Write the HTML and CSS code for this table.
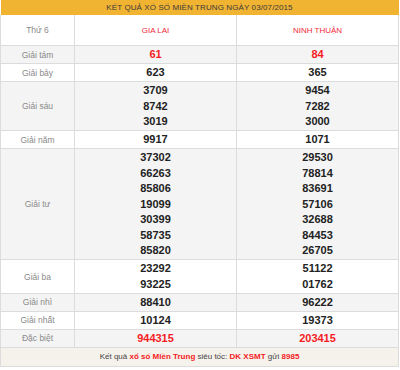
FILE: index.html
```html
<!DOCTYPE html>
<html lang="vi">
<head>
    <meta charset="UTF-8">
    <title>Kết quả xổ số Miền Trung</title>
    <link rel="stylesheet" href="styles.css">
</head>
<body>
    <table class="kq">
        <colgroup>
            <col class="col-label">
            <col class="col-tinh">
            <col class="col-tinh">
        </colgroup>
        <tr class="title">
            <td colspan="3">KẾT QUẢ XỔ SỐ MIỀN TRUNG NGÀY 03/07/2015</td>
        </tr>
        <tr class="tinh">
            <td class="label">Thứ 6</td>
            <td>GIA LAI</td>
            <td>NINH THUẬN</td>
        </tr>
        <tr class="alt">
            <td class="label">Giải tám</td>
            <td class="so red"><div>61</div></td>
            <td class="so red"><div>84</div></td>
        </tr>
        <tr>
            <td class="label">Giải bảy</td>
            <td class="so"><div>623</div></td>
            <td class="so"><div>365</div></td>
        </tr>
        <tr class="alt">
            <td class="label">Giải sáu</td>
            <td class="so"><div>3709</div><div>8742</div><div>3019</div></td>
            <td class="so"><div>9454</div><div>7282</div><div>3000</div></td>
        </tr>
        <tr>
            <td class="label">Giải năm</td>
            <td class="so"><div>9917</div></td>
            <td class="so"><div>1071</div></td>
        </tr>
        <tr class="alt">
            <td class="label">Giải tư</td>
            <td class="so">
                <div>37302</div><div>66263</div><div>85806</div><div>19099</div>
                <div>30399</div><div>58735</div><div>85820</div>
            </td>
            <td class="so">
                <div>29530</div><div>78814</div><div>83691</div><div>57106</div>
                <div>32688</div><div>84453</div><div>26705</div>
            </td>
        </tr>
        <tr>
            <td class="label">Giải ba</td>
            <td class="so"><div>23292</div><div>93225</div></td>
            <td class="so"><div>51122</div><div>01762</div></td>
        </tr>
        <tr class="alt">
            <td class="label">Giải nhì</td>
            <td class="so"><div>88410</div></td>
            <td class="so"><div>96222</div></td>
        </tr>
        <tr>
            <td class="label">Giải nhất</td>
            <td class="so"><div>10124</div></td>
            <td class="so"><div>19373</div></td>
        </tr>
        <tr class="alt">
            <td class="label">Đặc biệt</td>
            <td class="so red"><div>944315</div></td>
            <td class="so red"><div>203415</div></td>
        </tr>
        <tr class="footer">
            <td colspan="3">Kết quả <b>xổ số Miền Trung</b> siêu tốc: <b>DK XSMT</b> gửi <b>8985</b></td>
        </tr>
    </table>
</body>
</html>
```

FILE: styles.css
```css
body {
    margin: 0;
    font-family: "Liberation Sans", Arial, sans-serif;
    background: #fff;
}
.kq {
    width: 399px;
    border-collapse: collapse;
    table-layout: fixed;
}
.col-label {
    width: 74px;
}
.col-tinh {
    width: 162px;
}
.kq td {
    border: 1px solid #dcdcdc;
    text-align: center;
    vertical-align: middle;
    padding: 1px 0 0.5px;
}
.kq tr.title td {
    background: #f1b332;
    color: #3a3a3a;
    font-size: 8px;
    height: 15px;
    padding: 0;
    border: none;
    letter-spacing: 0.1px;
}
.kq tr.tinh td {
    height: 30px;
    padding: 0;
    font-size: 8px;
    color: #f0283a;
    border-top: none;
}
.kq tr.tinh td.label {
    color: #8a8a8a;
    font-size: 8.5px;
}
.alt td {
    background: #f4f4f4;
}
.label {
    color: #8a8a8a;
    font-size: 8.5px;
}
.so {
    font-size: 11px;
    font-weight: bold;
    color: #222;
}
.so div {
    line-height: 15.5px;
}
.so.red {
    color: #f41c24;
}
.kq tr.footer td {
    background: #f5f1eb;
    height: 18px;
    padding: 0;
    font-size: 8px;
    color: #444;
}
.footer b {
    color: #f41c24;
}
```
